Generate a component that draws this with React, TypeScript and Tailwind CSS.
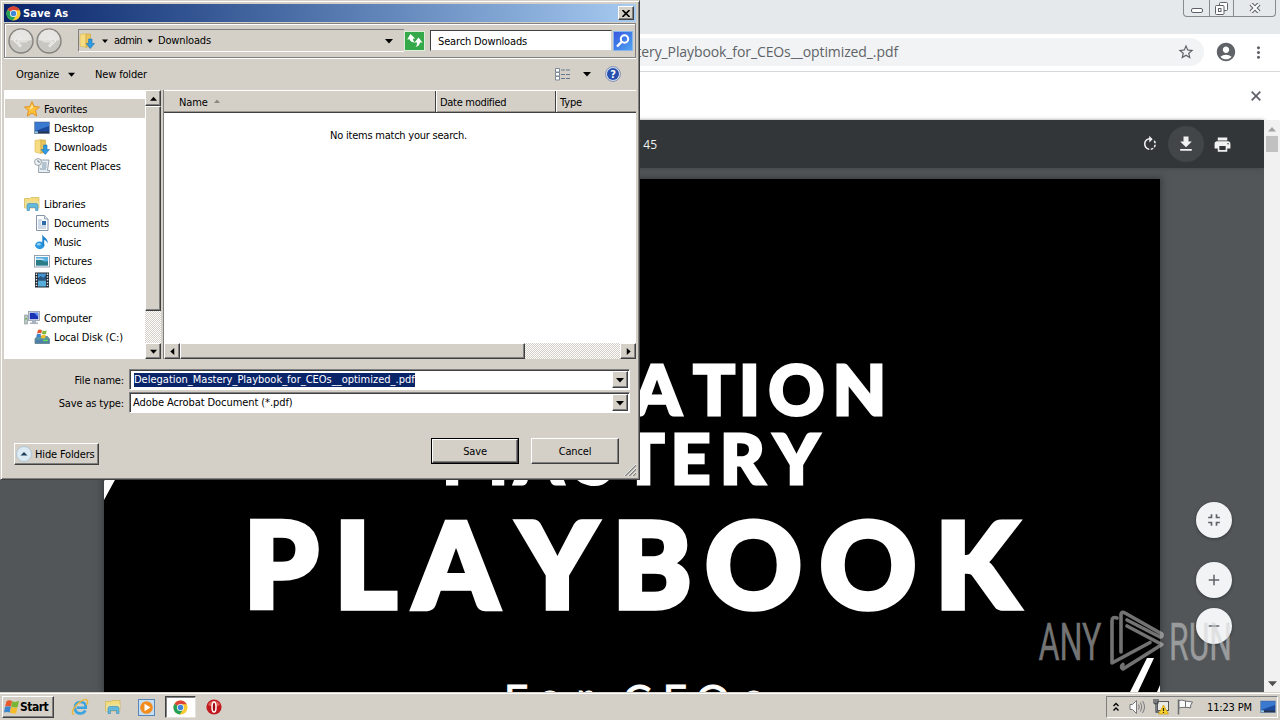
import React from 'react';
import { MdOutlineStarBorder, MdAccountCircle, MdMoreVert, MdPrint, MdFullscreenExit, MdAdd, MdRemove } from 'react-icons/md';

const raised = 'bg-[#d4d0c8] border border-t-white border-l-white border-r-[#404040] border-b-[#404040] shadow-[inset_-1px_-1px_#808080]';
const sunken = 'border border-t-[#808080] border-l-[#808080] border-r-white border-b-white';
const track = 'bg-[repeating-conic-gradient(#ffffff_0_25%,#d4d0c8_0_50%)] bg-[length:2px_2px]';

const Arrow = ({ dir = 'down', size = 7, color = '#000' }: { dir?: string; size?: number; color?: string }) => {
  const shapes: Record<string, string> = {
    down: '0,2 8,2 4,6.5',
    up: '0,6.5 8,6.5 4,2',
    left: '6,0 6,8 1.5,4',
    right: '2,0 2,8 6.5,4',
  };
  return (
    <svg width={size} height={size} viewBox="0 0 8 8" className="shrink-0">
      <polygon points={shapes[dir]} fill={color} />
    </svg>
  );
};

const ChromeIcon = ({ size = 16 }: { size?: number }) => (
  <svg width={size} height={size} viewBox="0 0 16 16" className="shrink-0">
    <circle cx="8" cy="8" r="7.5" fill="#f9cb2e" />
    <path d="M8 8L1.5 4.2A7.5 7.5 0 0 1 14.6 4.5H8Z" fill="#dd4437" />
    <path d="M8 8L1.5 4.2A7.5 7.5 0 0 0 7.2 15.5L11 9.5Z" fill="#24a058" />
    <circle cx="8" cy="8" r="3.8" fill="#f4f7f4" />
    <circle cx="8" cy="8" r="2.9" fill="#4285d8" />
  </svg>
);

const Icon = ({ children, size = 16 }: { children: React.ReactNode; size?: number }) => (
  <svg width={size} height={size} viewBox="0 0 16 16" className="shrink-0">
    {children}
  </svg>
);

const DownloadsIcon = () => (
  <Icon>
    <path d="M1 1.5L7 0.5V14.5L1 13Z" fill="#f5dc83" stroke="#dcb54c" strokeWidth=".6" />
    <path d="M7 1H11.5V14H7Z" fill="#e9c55e" stroke="#cfa33c" strokeWidth=".6" />
    <path d="M9.6 6H13V10.5H15.5L11.3 15.5L7.2 10.5H9.6Z" fill="#2f9be0" stroke="#1d6fb4" strokeWidth=".6" />
  </Icon>
);

const DesktopIcon = () => (
  <Icon>
    <rect x="0.5" y="2" width="15" height="11.5" fill="#1c4a9d" stroke="#7d93b0" strokeWidth=".8" />
    <path d="M1 2.5H15V6L1 11Z" fill="#3a79d0" />
    <rect x="1" y="11.5" width="14" height="1.8" fill="#26364e" />
    <rect x="1" y="11.3" width="3" height="2" fill="#8fc7dd" />
  </Icon>
);

const LibrariesIcon = () => (
  <Icon>
    <path d="M0.5 2.5H6L7 1.5H15V12H0.5Z" fill="#f2dc7d" stroke="#d3b351" strokeWidth=".7" />
    <path d="M1 5H15V12H1Z" fill="#eadf96" />
    <path d="M3 14.5V9.5Q3 7.5 5 7.5H12Q14 7.5 14 9.5V14.5H11.5V11.5H5.5V14.5Z" fill="#63b9dc" stroke="#3a8cb8" strokeWidth=".6" />
  </Icon>
);

const StarIcon = () => (
  <Icon>
    <path d="M8 .6L10.2 5.5L15.5 6L11.5 9.5L12.7 15L8 12.1L3.3 15L4.5 9.5L.5 6L5.8 5.5Z" fill="#ffc13c" stroke="#e28a16" strokeWidth=".9" />
    <path d="M8 3L9.2 6.4L5.5 9Z" fill="#ffe7a0" />
  </Icon>
);

const RecentIcon = () => (
  <Icon>
    <path d="M5 2H15L13.5 12.5H15.5V14.5H4.5Z" fill="#e8eef2" stroke="#7f8d98" strokeWidth=".8" />
    <path d="M8 5H12.5M8 7H12.5M8 9H12.5M6 11H12" stroke="#6f8ba2" strokeWidth=".9" />
    <circle cx="4" cy="4" r="3.4" fill="#f4f7f8" stroke="#8a959d" strokeWidth=".9" />
    <path d="M4 2V4H6" stroke="#4d6679" fill="none" strokeWidth=".8" />
  </Icon>
);

const DocumentIcon = () => (
  <Icon>
    <path d="M2.5 .5H10.5L14 4V15.5H2.5Z" fill="#fbfdff" stroke="#7889a0" strokeWidth=".9" />
    <path d="M10.5 .5V4H14" fill="#d8e3ee" stroke="#7889a0" strokeWidth=".7" />
    <path d="M4 5H8M4 7H7M4 9H7M4 11H12M4 13H12" stroke="#8ba3c2" strokeWidth=".8" />
    <rect x="8" y="6" width="4" height="4" fill="#2e6ba5" />
  </Icon>
);

const MusicIcon = () => (
  <Icon>
    <ellipse cx="5.8" cy="11.3" rx="4.6" ry="3.9" fill="#2b97df" />
    <path d="M8.3 12V.2C9.2 3.5 14 3.6 13.8 9.5C12.9 7.4 11.2 6.3 10.2 6.1V12Z" fill="#1f83cd" />
    <ellipse cx="4.8" cy="10.2" rx="1.9" ry="1.2" fill="#91d1f5" />
  </Icon>
);

const PicturesIcon = () => (
  <Icon>
    <rect x=".5" y="2.5" width="15" height="11.5" fill="#f8fafb" stroke="#8998a6" strokeWidth=".9" />
    <rect x="2" y="4" width="12" height="8.5" fill="#58afe0" />
    <path d="M2 7Q6 5 9 8Q12 9 14 8V12.5H2Z" fill="#2c7c86" />
    <path d="M2 5.5H8L11 7H2Z" fill="#c9e7f4" />
  </Icon>
);

const VideosIcon = () => (
  <Icon>
    <rect x="1" y=".5" width="14" height="15" fill="#222b35" />
    <rect x="4" y="1.5" width="8" height="6" fill="#4594cf" />
    <rect x="4" y="8.5" width="8" height="6" fill="#56addb" />
    <path d="M2.5 1.5V15M13.5 1.5V15" stroke="#dfe6ea" strokeWidth="1.4" strokeDasharray="1.4 1.4" />
    <path d="M4 6L7 4L9 6L12 3V7.5H4Z" fill="#245382" />
  </Icon>
);

const ComputerIcon = () => (
  <Icon>
    <rect x="4.5" y="1.5" width="11" height="9" fill="#e3e8ed" stroke="#8a98aa" strokeWidth=".8" />
    <rect x="5.8" y="2.8" width="8.4" height="6.4" fill="#1834b5" />
    <path d="M10 2.8H14.2V7Z" fill="#5d8cf0" />
    <path d="M8 10.5H12V12.5H14V14H6V12.5H8Z" fill="#a8b3bf" />
    <rect x=".7" y="5" width="2.6" height="9" fill="#bccbc0" stroke="#78868c" strokeWidth=".6" />
    <rect x="1.2" y="8" width="1.5" height="1.5" fill="#58ae44" />
  </Icon>
);

const WindowsFlag = ({ size = 16 }: { size?: number }) => (
  <Icon size={size}>
    <path d="M2.5 2.2Q5 .5 8 2L7 7.6Q4 6.4 1.1 7.8Z" fill="#e8562b" />
    <path d="M8.2 2.2Q11 3.6 15 2.1L13.7 7.9Q10.5 9.2 7.2 7.7Z" fill="#7ab534" />
    <path d="M1 8.1Q4 6.7 6.9 7.9L5.8 13.6Q3 12.2 0 13.6Z" fill="#3d85cc" />
    <path d="M7.1 8.1Q10 9.6 13.5 8.3L12.3 14.2Q9 15.2 6 13.8Z" fill="#f5bd2c" />
  </Icon>
);

const DiskIcon = () => (
  <Icon>
    <path d="M1 9.5L4 7.5H13.5L15.5 10V14.5H1Z" fill="#5b9c9d" stroke="#55717c" strokeWidth=".7" />
    <rect x="1.5" y="10.5" width="13.5" height="3.6" fill="#4d7faa" />
    <path d="M9 11.5H14" stroke="#67d94f" strokeWidth="1.5" />
    <path d="M4 1Q6 0 8 1.3L7.3 4.5Q5 3.6 3 4.6Z" fill="#e5582c" />
    <path d="M8.6 1.5Q10.5 2.3 12.5 1.5L12 5Q10 6 8 4.8Z" fill="#7fb93a" />
    <path d="M2.8 5.3Q5 4.4 7 5.3L6.4 8.5Q4.5 8 2.3 8.7Z" fill="#3d85cc" />
    <path d="M7.7 5.6Q10 6.5 11.8 5.8L11 9Q9 9.8 7 8.8Z" fill="#f5bd2c" />
  </Icon>
);

const TreeItem = ({ icon, label, root, active }: { icon: React.ReactNode; label: string; root?: boolean; active?: boolean }) => (
  <div className={`h-[19px] flex items-center gap-1 ${root ? 'pl-[19px]' : 'pl-[29px]'} ${active ? 'bg-[#d4d0c8]' : ''}`}>
    {icon}
    <span className="pt-1">{label}</span>
  </div>
);

const NavPane = () => (
  <div className="w-[157px] h-[269px] flex shrink-0">
    <div className="w-[141px] bg-white pt-[9px] pl-px">
      <TreeItem root active icon={<StarIcon />} label="Favorites" />
      <TreeItem icon={<DesktopIcon />} label="Desktop" />
      <TreeItem icon={<DownloadsIcon />} label="Downloads" />
      <TreeItem icon={<RecentIcon />} label="Recent Places" />
      <div className="h-[19px]" />
      <TreeItem root icon={<LibrariesIcon />} label="Libraries" />
      <TreeItem icon={<DocumentIcon />} label="Documents" />
      <TreeItem icon={<MusicIcon />} label="Music" />
      <TreeItem icon={<PicturesIcon />} label="Pictures" />
      <TreeItem icon={<VideosIcon />} label="Videos" />
      <div className="h-[19px]" />
      <TreeItem root icon={<ComputerIcon />} label="Computer" />
      <TreeItem icon={<DiskIcon />} label="Local Disk (C:)" />
    </div>
    <div className={`w-4 flex flex-col ${track}`}>
      <div className={`h-4 flex items-center justify-center ${raised}`}><Arrow dir="up" /></div>
      <div className={`h-[205px] ${raised}`} />
      <div className="flex-1" />
      <div className={`h-4 flex items-center justify-center ${raised}`}><Arrow /></div>
    </div>
  </div>
);

const FileList = () => (
  <div className="w-[473px] h-[269px] flex flex-col bg-white border-l border-[#808080]">
    <div className="h-[23px] flex items-center bg-[#d4d0c8] border-t border-t-white border-b border-b-[#404040] shadow-[inset_0_-1px_#9c988f]">
      <div className="w-[272px] h-full pt-[3px] pl-[15px] flex items-center gap-1.5 border-r border-[#404040]">
        Name
        <div className="pb-1"><Arrow dir="up" size={6} color="#8c8880" /></div>
      </div>
      <div className="w-[120px] h-full pt-[3px] pl-[3px] flex items-center border-l border-l-white border-r border-r-[#404040] tracking-[-0.3px]">Date modified</div>
      <div className="flex-1 h-full pt-[3px] pl-[3px] flex items-center border-l border-white">Type</div>
    </div>
    <div className="flex-1 pt-4 text-center pr-[3px] leading-[14px] tracking-[-0.23px]">No items match your search.</div>
    <div className={`h-4 flex ${track}`}>
      <div className={`w-4 flex items-center justify-center ${raised}`}><Arrow dir="left" /></div>
      <div className={`w-[345px] ${raised}`} />
      <div className="flex-1" />
      <div className={`w-4 flex items-center justify-center ${raised}`}><Arrow dir="right" /></div>
    </div>
  </div>
);

const NavCircle = ({ flip }: { flip?: boolean }) => (
  <svg width="26" height="26" viewBox="0 0 26 26" className={flip ? '-scale-x-100' : ''}>
    <circle cx="13" cy="13" r="12" fill="#c9c7c2" stroke="#85837f" strokeWidth="1.4" />
    <path d="M2.5 12A10.5 10.5 0 0 1 23.5 12Q13 15 2.5 12Z" fill="#e6e5e2" />
    <path d="M13 7.5L7.5 13L13 18.5M8 13H19" stroke="#f3f2f0" strokeWidth="2.6" fill="none" />
    <path d="M13 7.5L7.5 13L13 18.5M8 13H19" stroke="#b9b7b2" strokeWidth=".6" fill="none" />
  </svg>
);

const ComboBox = ({ children }: { children: React.ReactNode }) => (
  <div className={`w-[501px] h-[21px] bg-white flex items-center pl-[3px] pr-px shadow-[inset_1px_1px_#404040] ${sunken}`}>
    <div className="flex-1 pt-0.5">{children}</div>
    <div className={`w-4 h-[17px] flex items-center justify-center ${raised}`}><Arrow size={8} /></div>
  </div>
);

const SaveDialog = () => (
  <div className="absolute left-0 top-0 w-[640px] h-[480px] bg-[#d4d0c8] border border-t-[#d4d0c8] border-l-[#d4d0c8] border-r-[#404040] border-b-[#404040] shadow-[inset_1px_1px_#fff,inset_-1px_-1px_#808080] text-[11px] tracking-[-0.15px] text-black pt-[3px] pl-[3px] flex flex-col">
    <div className="w-[632px] h-[18px] flex items-center justify-between pl-0.5 pr-0.5 bg-linear-to-r from-[#0a246a] to-[#a6caf0]">
      <div className="flex items-center gap-0.5 text-white font-bold tracking-[0.2px]">
        <ChromeIcon size={15} />
        <span className="pt-0.5">Save As</span>
      </div>
      <div className={`w-4 h-[14px] flex items-center justify-center ${raised}`}>
        <svg width="8" height="7" viewBox="0 0 8 7"><path d="M.5 0L7.5 7M7.5 0L.5 7" stroke="#000" strokeWidth="1.6" /></svg>
      </div>
    </div>

    <div className="w-[632px] h-[35px] mt-px flex items-center pl-[3px] border border-[#808080] shadow-[inset_1px_1px_#fff,0_1px_#fff]">
      <div className="flex gap-0.5 shrink-0">
        <NavCircle />
        <NavCircle flip />
      </div>
      <div className="w-[326px] h-[23px] ml-[16px] shrink-0 flex items-center border border-r-0 border-t-[#808080] border-l-[#808080] border-b-white">
        <DownloadsIcon />
        <div className="ml-[7px] flex items-center">
          <Arrow size={6} />
          <span className="w-[39px] pl-1.5 pt-0.5 tracking-[-0.6px] whitespace-nowrap">admin</span>
          <Arrow size={6} />
          <span className="pl-[5px] pt-0.5">Downloads</span>
        </div>
        <div className="ml-auto pr-[11px]"><Arrow size={8} /></div>
      </div>
      <div className="w-[21px] h-5 shrink-0 border border-[#dcefd8] bg-[#35a94a] flex items-center justify-center">
        <svg width="17" height="15" viewBox="0 0 17 15" fill="#fff">
          <path d="M5 1L1 6H3.5Q4 9.5 8.5 10Q6.5 8.5 6.8 6H9Z" transform="rotate(-8 5 5)" />
          <path d="M12.5 4.5L8.5 9.5H11Q11.3 12.5 9.5 14Q13.5 13 14 9.5H16.5Z" />
        </svg>
      </div>
      <div className="w-[182px] h-[21px] ml-[5px] pt-[3px] shrink-0 bg-white flex items-center pl-[7px] border border-t-[#404040] border-l-[#404040] border-[#d4d0c8]">Search Downloads</div>
      <div className="w-5 h-5 ml-px shrink-0 bg-linear-to-br from-[#3855df] to-[#51a4f1] border border-[#86b5ef] flex items-center justify-center">
        <svg width="16" height="16" viewBox="0 0 16 16" fill="none">
          <circle cx="9.5" cy="6" r="3.7" stroke="#fff" strokeWidth="2" />
          <path d="M6.5 9L2 13.5" stroke="#fff" strokeWidth="2.4" />
        </svg>
      </div>
    </div>

    <div className="h-[32px] flex items-center pl-3 pr-[18px]">
      <span className="w-[52px] pt-0.5">Organize</span>
      <Arrow size={7} />
      <span className="ml-5 pt-0.5">New folder</span>
      <svg width="15" height="13" viewBox="0 0 15 13" className="ml-auto">
        <path d="M.5 .5H4.5V4H.5ZM.5 4.5H4.5V8H.5ZM.5 8.5H4.5V12H.5Z" fill="#fff" stroke="#7c8896" />
        <path d="M6 2H10M11 2H15M6 6.5H10M11 6.5H15M6 10.5H10M11 10.5H15" stroke="#66788f" />
      </svg>
      <div className="ml-[13px]"><Arrow size={8} /></div>
      <svg width="16" height="16" viewBox="0 0 16 16" className="ml-[14px]">
        <circle cx="8" cy="8" r="7.4" fill="#dfe5f2" stroke="#7586ae" strokeWidth=".9" />
        <circle cx="8" cy="8" r="6" fill="#264fae" />
        <text x="8" y="12" textAnchor="middle" fontSize="11" fontWeight="700" fill="#fff">?</text>
      </svg>
    </div>

    <div className="flex gap-[2px]">
      <NavPane />
      <FileList />
    </div>

    <div className="flex items-center mt-[10px]">
      <label className="w-[120px] text-right mr-[5px] pt-[3px]">File name:</label>
      <ComboBox>
        <span className="ml-px pb-px bg-[#0a246a] text-white tracking-normal">Delegation_Mastery_Playbook_for_CEOs__optimized_.pdf</span>
      </ComboBox>
    </div>
    <div className="flex items-center mt-[2px]">
      <label className="w-[120px] text-right mr-[5px] pt-[3px]">Save as type:</label>
      <ComboBox><span className="tracking-[-0.08px]">Adobe Acrobat Document (*.pdf)</span></ComboBox>
    </div>

    <div className="flex mt-[25px] pl-[10px]">
      <button className={`w-[85px] h-[22px] mt-[5px] pl-px flex items-center gap-[3px] ${raised}`}>
        <svg width="16" height="16" viewBox="0 0 16 16" className="shrink-0">
          <circle cx="8" cy="8" r="7.5" fill="#dceaf4" stroke="#a9c0d2" strokeWidth=".8" />
          <path d="M4.5 9.5L8 6L11.5 9.5Z" fill="#203e5c" />
        </svg>
        <span className="whitespace-nowrap pt-0.5">Hide Folders</span>
      </button>
      <button className="w-[88px] h-[26px] ml-[332px] border border-black">
        <span className={`w-full h-full pt-0.5 flex items-center justify-center ${raised}`}>Save</span>
      </button>
      <button className={`w-[88px] h-[26px] ml-3 pt-0.5 ${raised}`}>Cancel</button>
      <svg width="12" height="12" viewBox="0 0 12 12" className="ml-[5px] mt-[26px]">
        <path d="M1 12L12 1M5 12L12 5M9 12L12 9" stroke="#808080" strokeWidth="1.5" />
        <path d="M0 12L12 0M4 12L12 4M8 12L12 8" stroke="#fff" strokeWidth=".7" />
      </svg>
    </div>
  </div>
);

const CoverArt = () => (
  <svg width="1056" height="513" viewBox="104 179 1056 513" className="bg-black shadow-[0_0_6px_2px_#3b3e40] font-['Lato',sans-serif]" fill="#fff">
    <path d="M106 478H116L104 500V481ZM1147 658H1154L1138 692H1130ZM1160 685V692H1157Z" />
    <g fontWeight="900" textAnchor="middle" stroke="#fff">
      <text fontSize="69" strokeWidth="3" y="414.5" x="404 450 490 530 588 657 714 749.5 796.5 859.5">DELEGATION</text>
      <text fontSize="69" strokeWidth="3" y="483.5" x="475 539 595 643.5 690.5 742.5 796.5">MASTERY</text>
      <text fontSize="119" strokeWidth="5.4" y="607.8" x="281 365.5 456 557.5 652 753.5 868 976.5">PLAYBOOK</text>
    </g>
    <text fontSize="43" stroke="#fff" strokeWidth=".8" textAnchor="middle" y="716 713 713 716 716 716 716 713" x="516 550 584 610 637 675 713 753">For CEOs</text>
  </svg>
);

const FloatButton = ({ children, className = '' }: { children: React.ReactNode; className?: string }) => (
  <div className={`w-9 h-9 rounded-full bg-[#f1f3f4] text-[#5f6368] flex items-center justify-center shadow-[0_1px_3px_#33373a] ${className}`}>{children}</div>
);

const Watermark = () => (
  <svg width="198" height="66" viewBox="1037 608 198 66" className="absolute left-[1037px] top-[608px] font-['Roboto',sans-serif]" opacity=".55">
    <g fill="#d2d2d2" stroke="#d2d2d2" strokeWidth=".3" fontSize="52">
      <text x="1038.5" y="659.5" textLength="63" lengthAdjust="spacingAndGlyphs">ANY</text>
      <text x="1169" y="659.5" textLength="63" lengthAdjust="spacingAndGlyphs">RUN</text>
    </g>
    <g fill="none" stroke="#cfcfcf" strokeWidth="3.6" strokeLinejoin="round" strokeLinecap="round">
      <path d="M1117 618Q1112 616 1112 621V663L1150 642.5" />
      <path d="M1121 652V614Q1122 611 1125 613L1162 634Q1163 638 1159 636.5L1127 620" />
      <path d="M1127 626L1162 644.5L1123 669Q1120 667 1123 664.5" />
    </g>
  </svg>
);

const BrowserWindow = () => (
  <div className="h-[692px] flex flex-col overflow-hidden bg-white">
    <div className="h-[34px] bg-[#e6e9ec] flex justify-end pr-1">
      <div className="h-[17px] w-[93px] flex border border-t-0 border-[#868b90] rounded-b-[4px] text-[#5c6268]">
        <div className="w-[25px] flex items-end justify-center pb-[3px]">
          <div className="w-[12px] h-[5px] border border-current rounded-[2px] bg-white" />
        </div>
        <div className="w-[25px] border-x border-[#868b90] flex items-center justify-center">
          <svg width="13" height="13" viewBox="0 0 13 13" fill="#fff" stroke="currentColor">
            <rect x="4.5" y=".5" width="8" height="8" rx="1" />
            <rect x=".5" y="3.5" width="8.5" height="9" rx="1" />
            <rect x="3.5" y="6.5" width="2.5" height="3" />
          </svg>
        </div>
        <div className="flex-1 flex items-center justify-center">
          <svg width="12" height="10" viewBox="0 0 12 10">
            <path d="M2 1L10 9M10 1L2 9" stroke="#5c6268" strokeWidth="4.2" />
            <path d="M2 1L10 9M10 1L2 9" stroke="#fff" strokeWidth="2" />
          </svg>
        </div>
      </div>
    </div>
    <div className="h-[38px] flex items-center pb-px border-b border-[#d5d7d9] text-[#5f6368] pl-[120px]">
      <div className="w-[1084px] h-7 rounded-r-full bg-[#f1f3f4] flex items-center pr-[9px]">
        <div className="w-[778px] pb-px text-right whitespace-nowrap text-[14px] tracking-[-0.1px] font-['Open_Sans',sans-serif]">Delegation_Mastery_Playbook_for_CEOs__optimized_.pdf</div>
        <MdOutlineStarBorder className="ml-auto" size={18} />
      </div>
      <MdAccountCircle className="ml-[11px]" size={22} />
      <MdMoreVert className="ml-3" size={19} />
    </div>
    <div className="h-12 flex items-center justify-end pr-[19px] text-[#5f6368]">
      <svg width="10" height="10" viewBox="0 0 10 10" stroke="currentColor" strokeWidth="1.8"><path d="M.7 .7L9.3 9.3M9.3 .7L.7 9.3" /></svg>
    </div>
    <div className="flex-1 flex">
      <div className="w-[1264px] flex flex-col bg-[#525659]">
        <div className="h-12 bg-[#323639] flex items-center text-[#f1f1f1] pr-[32px] shadow-[0_1px_4px_#45494c]">
          <div className="w-[657px] pt-px text-right text-[12px] font-['Open_Sans',sans-serif]">1 / 45</div>
          <svg width="18" height="18" viewBox="0 0 24 24" fill="currentColor" className="ml-auto">
            <path d="M15.55 5.55L11 1v3.07C7.06 4.56 4 7.92 4 12s3.05 7.44 7 7.93v-2.02c-2.84-.48-5-2.94-5-5.91s2.16-5.43 5-5.91V10l4.55-4.45zM19.93 11a7.9 7.9 0 0 0-1.62-3.89l-1.42 1.42c.54.75.88 1.6 1.02 2.47h2.02zM13 17.9v2.02a7.92 7.92 0 0 0 3.9-1.61l-1.44-1.44c-.75.54-1.59.89-2.46 1.03zm3.89-2.42l1.42 1.41A7.9 7.9 0 0 0 19.93 13h-2.02a5.9 5.9 0 0 1-1.02 2.48z" />
          </svg>
          <div className="w-9 h-9 ml-[9px] mr-[9px] rounded-full bg-[#424649] flex items-center justify-center">
            <svg width="20" height="20" viewBox="0 0 24 24" fill="currentColor"><path d="M19 9h-4V3H9v6H5l7 7 7-7zM5 18v2h14v-2H5z" /></svg>
          </div>
          <MdPrint size={19} />
        </div>
        <div className="flex-1 pt-[11px] pl-[104px] flex">
          <CoverArt />
          <div className="pl-9 pt-[323px]">
            <FloatButton><MdFullscreenExit size={20} /></FloatButton>
            <FloatButton className="mt-6"><MdAdd size={18} /></FloatButton>
            <FloatButton className="mt-2.5"><MdRemove size={18} /></FloatButton>
          </div>
        </div>
      </div>
      <div className="w-4 bg-[#f1f1f1] flex flex-col items-center pt-[5px] pb-1">
        <Arrow dir="up" size={8} color="#a3a3a3" />
        <div className="w-3 h-4 mt-[3px] bg-[#c1c1c1]" />
        <div className="mt-auto"><Arrow size={9} color="#505050" /></div>
      </div>
    </div>
  </div>
);

const Taskbar = () => (
  <div className="h-7 bg-[#d4d0c8] border-t border-[#d4d0c8] shadow-[inset_0_1px_#fff] flex items-center pt-px px-[2px] text-[11px] text-black">
    <div className={`w-[52px] h-[22px] pl-px flex items-center font-bold text-[12px] tracking-[-0.5px] ${raised}`}>
      <WindowsFlag size={16} />
      <span>Start</span>
    </div>
    <svg width="18" height="18" viewBox="0 0 18 18" className="ml-[17px]" fill="none">
      <path d="M14.5 12.5Q12.5 15.5 9.5 15.5Q4 15.5 4 9.5Q4 4 9.3 4Q15 4 14.8 9.8H6" stroke="#3ba3de" strokeWidth="2.6" />
      <path d="M3 16.5Q-1 15 5 7.5Q13 -.5 16 2Q17.5 3.5 15.5 7" stroke="#eab83e" strokeWidth="1.5" />
    </svg>
    <div className="ml-4"><LibrariesIcon /></div>
    <svg width="17" height="17" viewBox="0 0 17 17" className="ml-[17px]">
      <rect x=".5" y=".5" width="16" height="16" fill="#c5def3" stroke="#5687b8" />
      <circle cx="8.5" cy="8.5" r="6.3" fill="#f28c1d" />
      <path d="M6.5 4.7L12.5 8.5L6.5 12.3Z" fill="#fff" />
    </svg>
    <div className="w-[31px] h-[22px] ml-[10px] bg-white border border-t-[#404040] border-l-[#404040] border-[#e4e1dc] shadow-[inset_1px_1px_#808080] flex items-center justify-center">
      <ChromeIcon size={15} />
    </div>
    <svg width="16" height="16" viewBox="0 0 16 16" className="ml-[10px]">
      <circle cx="8" cy="8" r="7.6" fill="#c1191d" />
      <path d="M2 6A6.5 6.5 0 0 1 14 6Q8 9 2 6Z" fill="#df5b53" />
      <ellipse cx="8" cy="8" rx="2" ry="5" fill="#a00d12" stroke="#fff" strokeWidth="1.5" />
    </svg>
    <div className={`w-[172px] h-[22px] ml-auto flex items-center pl-1.5 ${sunken}`}>
      <svg width="6" height="10" viewBox="0 0 6 10" fill="none" stroke="#000" strokeWidth="1.4"><path d="M.5 4L3 1.5L5.5 4M.5 8.5L3 6L5.5 8.5" /></svg>
      <svg width="17" height="16" viewBox="0 0 17 16" className="ml-[10px]" fill="none" stroke="#77797c">
        <path d="M1 5.5H3.5L7.5 1.5V14.5L3.5 10.5H1Z" fill="#fafafa" />
        <path d="M9.5 5.5Q11 8 9.5 10.5M11.5 3.5Q14 8 11.5 12.5M13.5 2Q17.5 8 13.5 14" />
      </svg>
      <svg width="16" height="16" viewBox="0 0 16 16" className="ml-[7px]">
        <rect x="4.5" y="2.5" width="11" height="9" fill="#e9e9e6" stroke="#55585b" />
        <path d="M1 0V4Q3 6 5 4V0M3 0V13H6" stroke="#4d5054" fill="none" strokeWidth="1.3" />
        <path d="M10.5 6L15.5 15H5.5Z" fill="#fbd026" stroke="#c99a10" strokeWidth=".7" />
        <path d="M10.5 9V12M10.5 13V14" stroke="#222" strokeWidth="1.2" />
      </svg>
      <svg width="17" height="16" viewBox="0 0 17 16" className="ml-2" fill="#fbfbfb" stroke="#6b6e71">
        <path d="M1.5 .5V15.5" strokeWidth="1.5" />
        <path d="M2 1.5Q5 .5 8.5 2L15.5 3Q13 6 13.5 9Q11 8 8.5 8.5Q5 8 2 9Z" />
        <path d="M8.5 2V8.5" />
      </svg>
      <span className="ml-[13px] pt-0.5 w-[46px] whitespace-nowrap tracking-[-0.15px]">11:23 PM</span>
      <div className="ml-[7px]"><DesktopIcon /></div>
    </div>
  </div>
);

const App = () => {
  return (
    <div className="relative w-[1280px] h-[720px] overflow-hidden font-['DejaVu_Sans_Condensed','DejaVu_Sans',sans-serif]">
      <BrowserWindow />
      <Taskbar />
      <SaveDialog />
      <Watermark />
    </div>
  );
};

export default App;
